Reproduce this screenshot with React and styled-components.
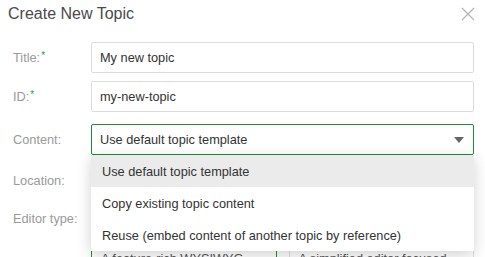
import React from "react";
import styled, { createGlobalStyle } from "styled-components";

const GlobalStyle = createGlobalStyle`
  html, body {
    margin: 0;
    padding: 0;
    background: #fff;
    overflow: hidden;
  }
  body {
    font-family: "Liberation Sans", Arial, sans-serif;
    color: #333;
  }
`;

const Dialog = styled.div`
  width: 485px;
  height: 257px;
  overflow: hidden;
  box-sizing: border-box;
`;

const Header = styled.div`
  display: flex;
  align-items: center;
  justify-content: space-between;
  height: 28px;
  padding: 0 9px 0 8px;
`;

const Heading = styled.h1`
  margin: 0;
  font-size: 16px;
  font-weight: 400;
  color: #4a4a4a;
`;

const CloseButton = styled.button`
  display: flex;
  align-items: center;
  justify-content: center;
  width: 16px;
  height: 16px;
  padding: 0;
  border: none;
  background: none;
  cursor: pointer;
`;

const Form = styled.div`
  display: flex;
  flex-direction: column;
  padding: 14px 11px 0 13px;
`;

const Row = styled.div`
  display: grid;
  grid-template-columns: 78px 1fr;
  align-items: ${({ top }) => (top ? "start" : "center")};
  margin-bottom: ${({ gap }) => gap}px;
`;

const Label = styled.label`
  font-size: 12.75px;
  color: #9a9a9a;
  padding-top: ${({ top }) => (top ? "7px" : "0")};
`;

const Required = styled.span`
  color: #2e9a3c;
  font-size: 10px;
  vertical-align: top;
  margin-left: 1px;
`;

const Input = styled.div`
  height: 31px;
  box-sizing: border-box;
  border: 1px solid ${({ focused }) => (focused ? "#1f8a3b" : "#dcdcdc")};
  border-radius: 2px;
  display: flex;
  align-items: center;
  padding: 0 8px;
  font-size: 12.75px;
  color: #333;
  background: #fff;
`;

const SelectWrap = styled.div`
  position: relative;
`;

const Select = styled(Input)`
  justify-content: space-between;
  padding-right: 9px;
`;

const Menu = styled.ul`
  position: absolute;
  z-index: 2;
  top: 100%;
  left: 0;
  right: 0;
  margin: 0;
  padding: 0;
  list-style: none;
  background: #fff;
  box-shadow: 0 4px 14px rgba(0, 0, 0, 0.18);
`;

const Option = styled.li`
  height: 32px;
  display: flex;
  align-items: center;
  padding: 0 11px;
  font-size: 12.75px;
  color: #333;
  background: ${({ active }) => (active ? "#ebebeb" : "#fff")};
`;

const Cards = styled.div`
  display: grid;
  grid-template-columns: 1fr 1fr;
  gap: 12px;
`;

const Card = styled.div`
  border: 1px solid #dcdcdc;
  border-color: ${({ selected }) => (selected ? "#1f8a3b" : "#dcdcdc")};
  padding: 8px 9px;
  height: 90px;
  font-size: 12.75px;
  color: #555;
`;

const CardTitle = styled.div`
  font-weight: 700;
  margin-bottom: 23px;
`;

const Chevron = () => (
  <svg width="10" height="6" viewBox="0 0 10 6">
    <path d="M0 0 L10 0 L5 6 Z" fill="#666" />
  </svg>
);

const CloseIcon = () => (
  <svg width="14" height="14" viewBox="0 0 14 14">
    <path d="M1 1 L13 13 M13 1 L1 13" stroke="#b5b5b5" strokeWidth="1.3" />
  </svg>
);

export default function App() {
  return (
    <Dialog>
      <GlobalStyle />
      <Header>
        <Heading>Create New Topic</Heading>
        <CloseButton aria-label="Close">
          <CloseIcon />
        </CloseButton>
      </Header>
      <Form>
        <Row gap={8}>
          <Label>
            Title:<Required>*</Required>
          </Label>
          <Input>My new topic</Input>
        </Row>
        <Row gap={12}>
          <Label>
            ID:<Required>*</Required>
          </Label>
          <Input>my-new-topic</Input>
        </Row>
        <Row gap={10}>
          <Label>Content:</Label>
          <SelectWrap>
            <Select focused>
              <span>Use default topic template</span>
              <Chevron />
            </Select>
            <Menu>
              <Option active>Use default topic template</Option>
              <Option>Copy existing topic content</Option>
              <Option>Reuse (embed content of another topic by reference)</Option>
            </Menu>
          </SelectWrap>
        </Row>
        <Row gap={8}>
          <Label>Location:</Label>
          <Input>/docs</Input>
        </Row>
        <Row top gap={0}>
          <Label top>Editor type:</Label>
          <Cards>
            <Card selected>
              <CardTitle>Visual editor</CardTitle>
              A feature-rich WYSIWYG
            </Card>
            <Card>
              <CardTitle>Markdown editor</CardTitle>
              A simplified editor focused on
            </Card>
          </Cards>
        </Row>
      </Form>
    </Dialog>
  );
}
